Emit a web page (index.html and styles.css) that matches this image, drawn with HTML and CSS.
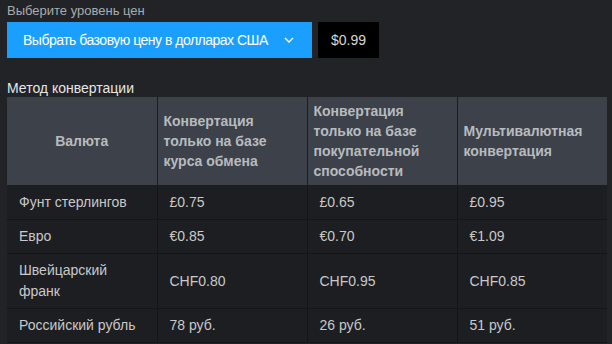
FILE: index.html
```html
<!DOCTYPE html>
<html lang="ru">
<head>
<meta charset="utf-8">
<link rel="stylesheet" href="styles.css">
</head>
<body>
<div class="page">
  <div class="label">Выберите уровень цен</div>
  <div class="picker">
    <div class="select">
      <span class="select-text">Выбрать базовую цену в долларах США</span>
      <svg class="chev" width="10" height="6" viewBox="0 0 10 6"><path d="M1 1 L5 5 L9 1" fill="none" stroke="#fff" stroke-width="1.4"/></svg>
    </div>
    <div class="price">$0.99</div>
  </div>
  <div class="heading">Метод конвертации</div>
  <table class="conv">
    <thead>
      <tr>
        <th class="center">Валюта</th>
        <th>Конвертация только на базе курса обмена</th>
        <th>Конвертация только на базе покупательной способности</th>
        <th>Мультивалютная конвертация</th>
      </tr>
    </thead>
    <tbody>
      <tr><td>Фунт стерлингов</td><td>£0.75</td><td>£0.65</td><td>£0.95</td></tr>
      <tr><td>Евро</td><td>€0.85</td><td>€0.70</td><td>€1.09</td></tr>
      <tr><td>Швейцарский франк</td><td>CHF0.80</td><td>CHF0.95</td><td>CHF0.85</td></tr>
      <tr><td>Российский рубль</td><td>78 руб.</td><td>26 руб.</td><td>51 руб.</td></tr>
    </tbody>
  </table>
</div>
</body>
</html>
```
FILE: styles.css
```css
html, body {
  margin: 0;
  padding: 0;
  background: #222327;
  font-family: "Liberation Sans", Arial, sans-serif;
}
.page {
  padding: 3px 5px 0 7px;
}
.label {
  font-size: 13px;
  line-height: 16px;
  color: #a9abad;
  height: 19px;
}
.picker {
  display: flex;
  gap: 6px;
  height: 36px;
}
.select {
  width: 305px;
  background: #1a9fff;
  color: #fff;
  font-size: 14px;
  display: flex;
  align-items: center;
  padding-left: 16px;
  box-sizing: border-box;
  white-space: nowrap;
}
.select-text {
  letter-spacing: -0.5px;
}
.chev {
  margin-left: 16px;
}
.price {
  width: 61px;
  background: #000;
  color: #d8d8d2;
  font-size: 14px;
  display: flex;
  align-items: center;
  justify-content: center;
}
.heading {
  margin-top: 21px;
  font-size: 14px;
  line-height: 18px;
  color: #e6e6e6;
}
.conv {
  width: 600px;
  border-collapse: collapse;
  table-layout: fixed;
}
.conv th {
  background: #3d424a;
  color: #b7bbbf;
  font-weight: bold;
  font-size: 14px;
  line-height: 20px;
  text-align: left;
  padding: 4px 6px;
  border-left: 1px solid #1a1c20;
  border-bottom: 1px solid #1a1c20;
  vertical-align: middle;
}
.conv th:first-child {
  border-left: none;
}
.conv th.center {
  text-align: center;
}
.conv td {
  background: #1c1e22;
  color: #c9c9c9;
  font-size: 14px;
  line-height: 21px;
  padding: 6px 12px;
  border-left: 1px solid #141518;
  border-bottom: 1px solid #141518;
  vertical-align: middle;
}
.conv td:first-child {
  border-left: none;
}
```
